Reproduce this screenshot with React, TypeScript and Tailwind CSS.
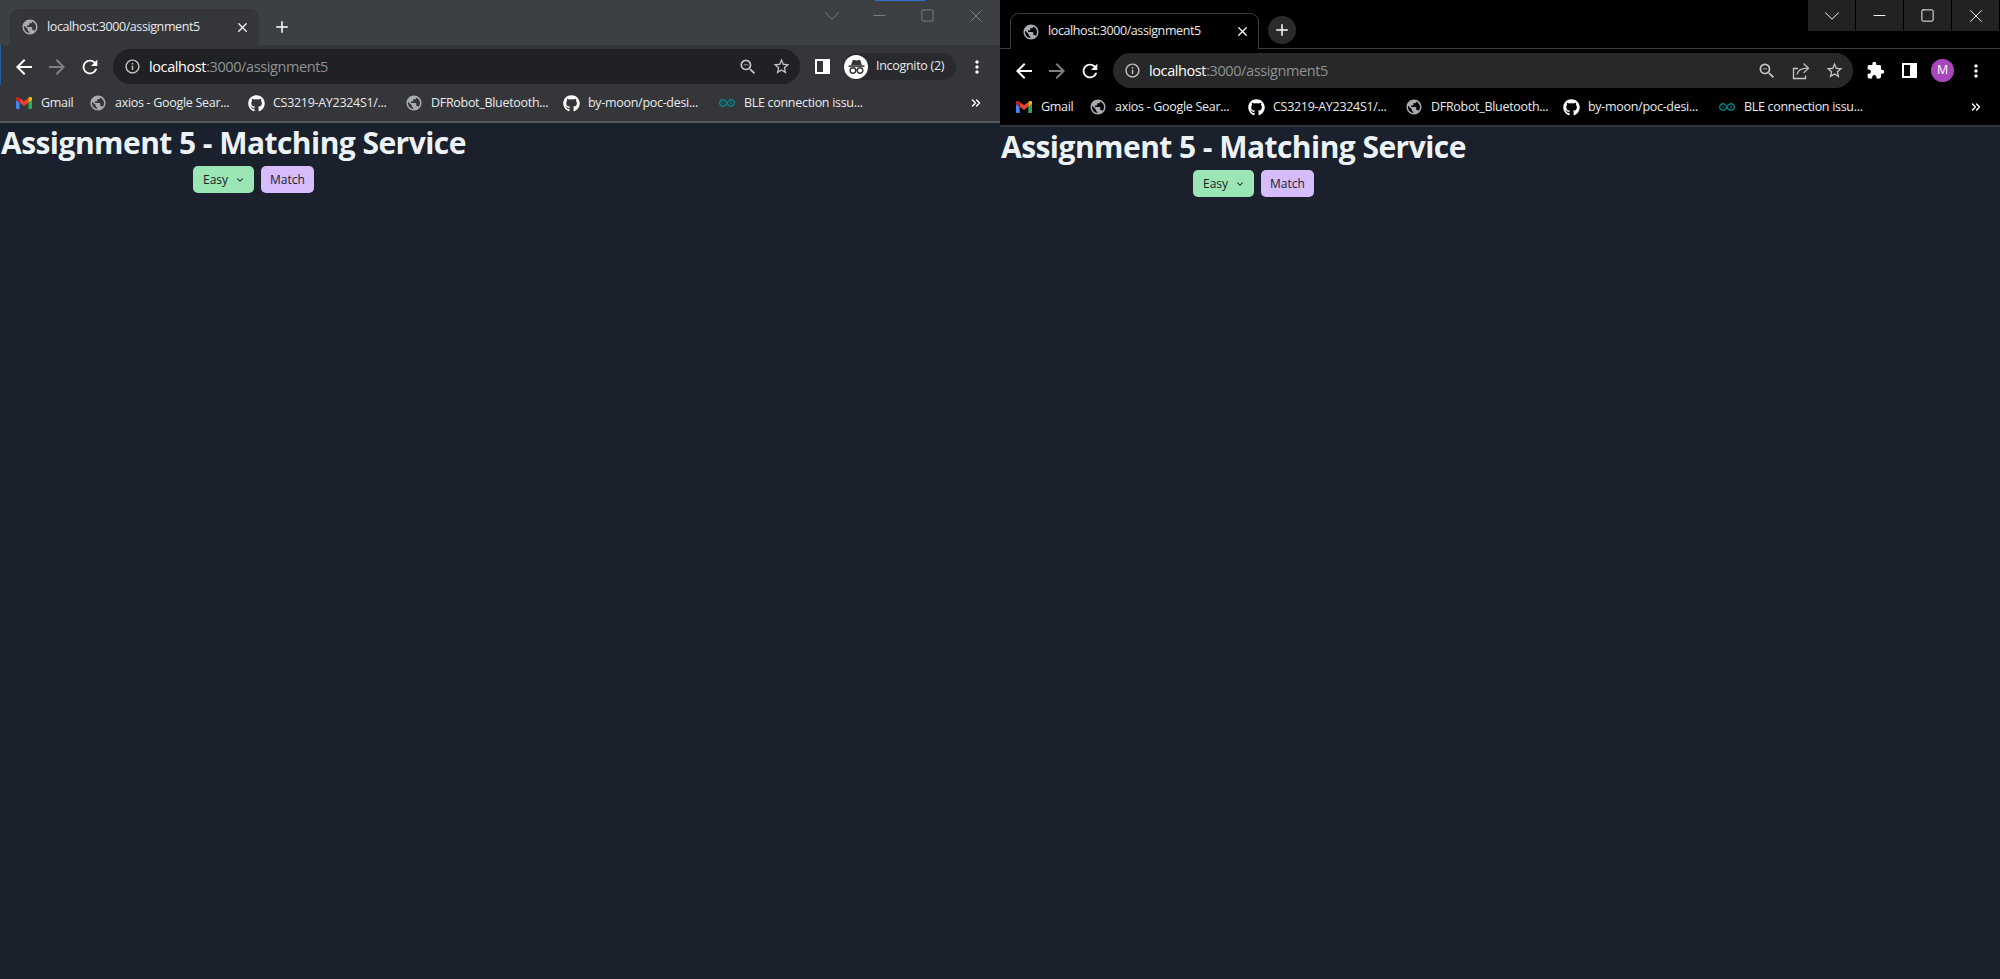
import { ChevronDown, ChevronsRight, Minus, Plus, Square, X } from 'lucide-react'
import { FaGithub } from 'react-icons/fa'
import { MdArrowBack, MdArrowForward, MdExtension, MdInfoOutline, MdMoreVert, MdPublic, MdRefresh, MdStarBorder, MdZoomOut } from 'react-icons/md'
import { SiArduino } from 'react-icons/si'

const uiFont = "font-['Open_Sans','Noto_Sans',sans-serif]"

const bookmarks = [
  { label: 'Gmail', icon: 'gmail', width: 'w-[74px]' },
  { label: 'axios - Google Sear...', icon: 'globe', width: 'w-[158px]' },
  { label: 'CS3219-AY2324S1/...', icon: 'github', width: 'w-[158px]' },
  { label: 'DFRobot_Bluetooth...', icon: 'globe', width: 'w-[157px]' },
  { label: 'by-moon/poc-desi...', icon: 'github', width: 'w-[156px]' },
  { label: 'BLE connection issu...', icon: 'arduino', width: 'w-[160px]' },
]

function GmailIcon() {
  return (
    <svg viewBox="0 0 24 18" className="w-4 h-3">
      <path d="M1.6 18H5.5V8.5L0 4.4V16.4C0 17.3.7 18 1.6 18Z" fill="#4285f4" />
      <path d="M18.5 18h3.9c.9 0 1.6-.7 1.6-1.6V4.4L18.5 8.5Z" fill="#34a853" />
      <path d="M18.5 1.4V8.5L24 4.4V2C24 0 21.7-1.200 20.100.0Z" fill="#fbbc04" />
      <path d="M5.500 8.500V1.400L12 6.300l6.500-4.900V8.500L12 13.400Z" fill="#ea4335" />
      <path d="M0 2V4.400L5.500 8.500V1.400L3.900.0C2.300-1.200 0 0 0 2Z" fill="#c5221f" />
    </svg>
  )
}

function BookmarkIcon({ icon }: { icon: string }) {
  if (icon === 'gmail') return <GmailIcon />
  if (icon === 'github') return <FaGithub className="w-[17px] h-[17px] shrink-0 text-white" />
  if (icon === 'arduino') return <SiArduino className="w-4 h-4 shrink-0 text-[#00878f]" />
  return <MdPublic className="w-[18px] h-[18px] shrink-0 text-[#a8abaf]" />
}

function SidePanelIcon() {
  return (
    <svg viewBox="0 0 15 15" className="w-[15px] h-[15px]">
      <path d="M0 0h15v15H0Z M2 2v11h6V2Z" fill="#fff" fillRule="evenodd" />
    </svg>
  )
}

function ShareIcon() {
  return (
    <svg viewBox="0 0 18 18" className="w-[18px] h-[18px]" fill="none" stroke="currentColor" strokeWidth="1.300">
      <path d="M6 6.500H1.500v10h12v-3" />
      <path d="M5 12.500c.6-3.800 4-6.300 11-6.300" />
      <path d="M11.500 1.500 16.500 6.200l-5 4.700" />
    </svg>
  )
}

function IncognitoIcon() {
  return (
    <svg viewBox="0 0 24 24" className="w-[19px] h-[19px]" fill="none" stroke="#35363a">
      <path d="M5 10.500 7.500 3.500 12 4.500l4.500-1L19 10.500Z" fill="#35363a" stroke="none" />
      <path d="M2 11.500h20" strokeWidth="2" />
      <circle cx="7.500" cy="17" r="3.500" strokeWidth="1.800" />
      <circle cx="16.500" cy="17" r="3.500" strokeWidth="1.800" />
      <path d="M11 16.500h2" strokeWidth="1.800" />
    </svg>
  )
}

function BrowserWindow({ incognito }: { incognito: boolean }) {
  const bar = incognito ? 'bg-[#35363a]' : 'bg-black'

  return (
    <div className={`relative flex flex-col w-1/2 h-full ${uiFont}`}>
      {/* 标签栏 */}
      <div className={`flex shrink-0 items-end pl-[10px] ${incognito ? 'h-[45px] bg-[#3c4043]' : 'h-[49px] bg-black border-b border-[#3c3c3c]'}`}>
        <div
          className={`flex items-center w-[249px] h-[36px] pl-[11px] rounded-t-[9px] ${
            incognito ? 'pr-[9px] bg-[#35363a]' : 'pr-[8px] bg-black border border-b-0 border-[#3c3c3c] -mb-px'
          }`}
        >
          <MdPublic className="w-[18px] h-[18px] text-[#a8abaf]" />
          <span className="ml-[8px] text-[12.500px] leading-none tracking-[-0.4px] text-[#e8eaed]">localhost:3000/assignment5</span>
          <X className="ml-auto w-[15px] h-[15px] text-white" strokeWidth={2} />
        </div>
        <div className={`flex items-center justify-center w-7 h-7 ml-[9px] mb-1 rounded-full ${incognito ? '' : 'bg-[#2a2a2a]'}`}>
          <Plus className="w-[18px] h-[18px] text-white" strokeWidth={2} />
        </div>

        {/* 窗口按钮 */}
        <div className={`flex self-start ml-auto mr-px gap-px ${incognito ? 'text-[#7c7f83]' : 'text-white'}`}>
          <div className={`flex items-center justify-center w-[47px] h-[31px] ${incognito ? '' : 'bg-[#222222]'}`}>
            <ChevronDown className="w-[26px] h-[26px]" strokeWidth={0.900} />
          </div>
          <div className={`flex items-center justify-center w-[47px] h-[31px] ${incognito ? '' : 'bg-[#222222]'}`}>
            <Minus className="w-[19px] h-[19px]" strokeWidth={1.200} />
          </div>
          <div className={`flex items-center justify-center w-[47px] h-[31px] ${incognito ? '' : 'bg-[#222222]'}`}>
            <Square className="w-[15px] h-[15px]" strokeWidth={1.500} />
          </div>
          <div className={`flex items-center justify-center w-[47px] h-[31px] ${incognito ? '' : 'bg-[#222222]'}`}>
            <X className="w-[22px] h-[22px]" strokeWidth={1} />
          </div>
        </div>
      </div>

      {/* 地址栏 */}
      <div className={`flex shrink-0 items-center h-[40px] pt-[4px] pb-px ${bar}`}>
        <div className="flex items-center w-[113px] pl-[12px] gap-[9px]">
          <MdArrowBack className="w-6 h-6 text-white" />
          <MdArrowForward className="w-6 h-6 text-[#7c7f83]" />
          <MdRefresh className="ml-px w-[22px] h-[22px] text-white" />
        </div>
        <div className={`flex flex-1 items-center h-[35px] pl-[11px] rounded-full ${incognito ? 'bg-[#202124]' : 'bg-[#282828]'}`}>
          <MdInfoOutline className="w-[17px] h-[17px] text-[#c4c7c5]" />
          <span className="ml-[8px] pt-[2px] text-[14.500px] leading-none tracking-[-0.4px] text-[#8f9296]">
            <span className="text-white">localhost</span>:3000/assignment5
          </span>
          <div className={`flex items-center ml-auto pr-[9px] text-[#c4c7c5] ${incognito ? 'gap-[14px]' : 'gap-[15px]'}`}>
            <MdZoomOut className="w-5 h-5" />
            {!incognito && <ShareIcon />}
            <MdStarBorder className="w-[19px] h-[19px]" />
          </div>
        </div>
        {incognito ? (
          <div className="flex items-center w-[200px] pl-[15px]">
            <SidePanelIcon />
            <div className="flex items-center h-[27px] w-[113px] ml-[13px] pl-[1px] rounded-full bg-[#292a2d]">
              <span className="flex items-center justify-center w-[24px] h-[24px] rounded-full bg-white">
                <IncognitoIcon />
              </span>
              <span className="ml-[8px] text-[12.500px] leading-none tracking-[-0.3px] text-[#e8eaed]">Incognito (2)</span>
            </div>
            <MdMoreVert className="ml-[11px] w-5 h-5 text-white" />
          </div>
        ) : (
          <div className="flex items-center w-[147px] pl-[13px]">
            <MdExtension className="w-[19px] h-[19px] text-white" />
            <span className="ml-[17px]"><SidePanelIcon /></span>
            <span className="flex items-center justify-center ml-[14px] w-[23px] h-[23px] rounded-full bg-[#a846bc] text-[12.500px] leading-none text-white">M</span>
            <MdMoreVert className="ml-[12px] w-5 h-5 text-white" />
          </div>
        )}
      </div>

      {/* 书签栏 */}
      <div className={`flex shrink-0 items-center pl-[16px] h-[38px] border-b-2 ${incognito ? 'border-[#56585c]' : 'border-[#35363a]'} ${bar}`}>
        {bookmarks.map((b) => (
          <div key={b.label} className={`flex items-center shrink-0 gap-[9px] ${b.width}`}>
            <span className="flex items-center justify-center w-4 shrink-0">
              <BookmarkIcon icon={b.icon} />
            </span>
            <span className="text-[12.500px] leading-none tracking-[-0.3px] whitespace-nowrap text-[#e8eaed]">{b.label}</span>
          </div>
        ))}
        <ChevronsRight className="ml-auto mr-[17px] w-[14px] h-[14px] text-white" strokeWidth={2.500} />
      </div>

      {/* 页面内容 */}
      <div className="flex-1 bg-[#1a202c]">
        <h1 className="pl-px pt-px text-[30px] leading-[38px] font-bold tracking-[-0.55px] text-[#edf2f7]">Assignment 5 - Matching Service</h1>
        <div className="flex mt-[4px] ml-[193px] gap-[7px]">
          <button className="flex items-center h-[27px] w-[61px] pl-[10px] rounded-[5px] bg-[#9ae6b4] text-[12px] text-[#1a202c]">
            Easy
            <ChevronDown className="ml-[7px] w-[10px] h-[10px]" strokeWidth={2.500} />
          </button>
          <button className="h-[27px] w-[53px] rounded-[5px] bg-[#d6bcfa] text-[12px] text-[#1a202c]">Match</button>
        </div>
      </div>

      {incognito && <div className="absolute top-0 left-[875px] w-[50px] h-px bg-[#2f6fd0]" />}
      {incognito && <div className="absolute top-[45px] left-0 w-px h-[40px] bg-[#1f5f9e]" />}
    </div>
  )
}

export default function App() {
  return (
    <div className="flex w-full h-screen overflow-hidden bg-[#1a202c]">
      <BrowserWindow incognito />
      <div className="w-px h-full -ml-px bg-[#0f131a]" />
      <BrowserWindow incognito={false} />
    </div>
  )
}
